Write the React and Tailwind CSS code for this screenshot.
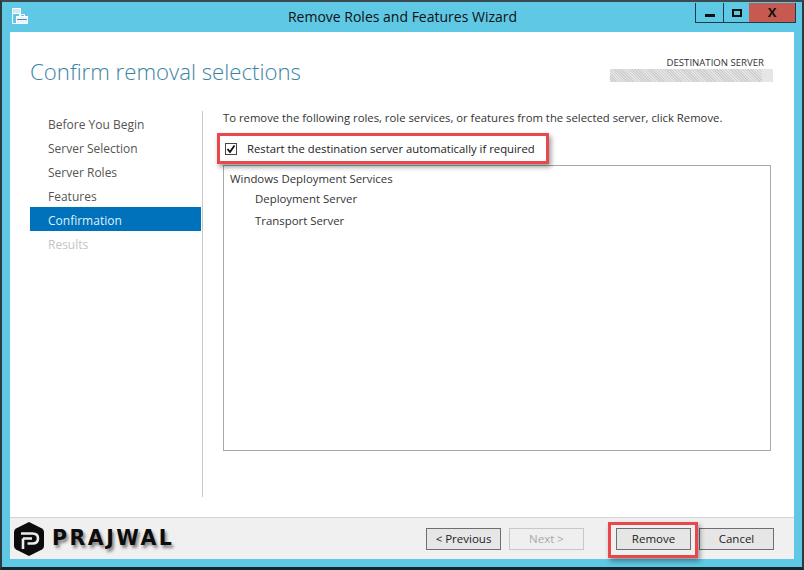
const navItems = [
  { label: "Before You Begin" },
  { label: "Server Selection" },
  { label: "Server Roles" },
  { label: "Features" },
  { label: "Confirmation", active: true },
  { label: "Results", disabled: true },
];

function AppIcon() {
  return (
    <svg width="16" height="16" viewBox="0 0 16 16" fill="none" stroke="#fff" strokeWidth="1">
      <rect x="0.5" y="0.5" width="8" height="5" fill="#cfeaf5" />
      <rect x="0.5" y="5.5" width="8" height="10" fill="#5ec8e5" />
      <rect x="4.5" y="8.5" width="11" height="7" fill="#e8f5fa" stroke="#fff" />
      <path d="M7.5 8V6.5h5V8" />
      <path d="M5 11.5h10" stroke="#4f8fb0" />
    </svg>
  );
}

function Logo() {
  return (
    <svg width="30" height="34" viewBox="0 0 30 34">
      <path d="M15 0 L28 6.5 Q30 7.5 30 10 V24 Q30 26.5 28 27.5 L15 34 L2 27.5 Q0 26.5 0 24 V10 Q0 7.5 2 6.5 Z" fill="#0c0c0c" />
      <path d="M7 11.5 H18.5 Q24 11.5 24 16.5 Q24 21.5 18.5 21.5 H13.5 M9 16.5 V27 M9 16.5 H18" fill="none" stroke="#ececec" strokeWidth="2.6" />
    </svg>
  );
}

function Btn({ children, disabled }) {
  return (
    <button
      className={
        disabled
          ? "w-[75px] h-[22px] bg-[#efefef] border border-[#c8c8c8] text-[11.5px] text-[#a8a8a8] flex items-center justify-center"
          : "w-[75px] h-[22px] bg-[#e6e6e6] border border-[#6f6f6f] text-[11.5px] text-[#222] flex items-center justify-center"
      }
    >
      {children}
    </button>
  );
}

export default function App() {
  return (
    <div className="relative w-[804px] h-[570px] overflow-hidden bg-[#5ec8e5] border-t-2 border-x-2 border-b-[3px] border-t-[#3a4a50] border-x-[#2c3a40] border-b-[#12262e] flex flex-col font-['Open_Sans','Noto_Sans',sans-serif] text-[#333]">
      <div className="relative h-[30px] shrink-0 flex items-start">
        <div className="ml-[10px] mt-[6px]"><AppIcon /></div>
        <div className="flex-1 text-center text-[14px] leading-[30px] text-[#111] ml-[-26px] mr-[-108px]">Remove Roles and Features Wizard</div>
        <div className="flex h-[20px] mt-[1px] mr-[6px] border border-t-0 border-[#1d3c48]">
          <div className="w-[28px] border-r border-[#1d3c48] flex items-end justify-center pb-[5px]">
            <div className="w-[10px] h-[3px] bg-[#111]" />
          </div>
          <div className="w-[25px] flex items-center justify-center">
            <div className="w-[10px] h-[8px] border-2 border-[#111]" />
          </div>
          <div className="w-[46px] bg-[#c75a50] flex items-center justify-center text-[13px] font-bold text-[#111] leading-none">X</div>
        </div>
      </div>

      <div className="flex-1 mx-[8px] flex flex-col bg-white min-h-0">
        <div className="h-[77px] shrink-0 flex justify-between pl-[20px] pr-[21px]">
          <div className="pt-[21px] text-[22.2px] leading-[38px] font-light text-[#3b84a4]">Confirm removal selections</div>
          <div className="w-[163px] pt-[25px]">
            <div className="text-[9.6px] leading-[12px] text-[#333] text-right pr-[9px]">DESTINATION SERVER</div>
            <div className="h-[13px] flex">
              <div className="w-[152px] bg-[#d9d9d9] bg-[repeating-linear-gradient(45deg,#cfcfcf_0px,#cfcfcf_1px,#e4e4e4_1px,#e4e4e4_2px)]" />
              <div className="flex-1 bg-[#e6e6e6]" />
            </div>
          </div>
        </div>

        <div className="flex-1 flex min-h-0">
          <div className="w-[171px] ml-[20px] shrink-0 pt-[2px]">
            {navItems.map((item) => (
              <div
                key={item.label}
                className={
                  "h-[24px] pl-[18px] text-[12px] leading-[27px] " +
                  (item.active ? "bg-[#0072bc] text-[#dff1fb]" : item.disabled ? "text-[#c4c4c4]" : "text-[#555]")
                }
              >
                {item.label}
              </div>
            ))}
          </div>
          <div className="w-px h-[386px] ml-[1px] mt-[2px] bg-[#c9c9c9] shrink-0" />
          <div className="ml-[20px] w-[548px] flex flex-col">
            <div className="text-[11.3px] leading-[16px] text-[#333] mt-[1px] h-[31px]">
              To remove the following roles, role services, or features from the selected server, click Remove.
            </div>
            <div className="flex items-center h-[16px] ml-[2px] text-[11.3px]">
              <div className="w-[12px] h-[12px] border border-[#444] flex items-center justify-center bg-white">
                <svg width="10" height="10" viewBox="0 0 10 10" fill="none" stroke="#111" strokeWidth="1.8">
                  <path d="M1.5 5 L4 8 L8.5 1.5" />
                </svg>
              </div>
              <span className="ml-[10px] text-[#222]">Restart the destination server automatically if required</span>
            </div>
            <div className="mt-[8px] h-[286px] border border-[#a8a8a8] pl-[6px] pt-[3px] text-[11.4px] text-[#333]">
              <div className="leading-[20px]">Windows Deployment Services</div>
              <div className="leading-[20px] pl-[25px]">Deployment Server</div>
              <div className="leading-[24px] pl-[25px]">Transport Server</div>
            </div>
          </div>
        </div>

        <div className="h-[42px] shrink-0 bg-[#f0f0f0] border-t border-[#d4d4d4] flex items-center pl-[4px] pr-[20px]">
          <Logo />
          <span className="ml-[8px] font-['DejaVu_Sans',sans-serif] font-bold text-[20.5px] tracking-[2.5px] text-[#0c0c0c] [text-shadow:2px_3px_3px_rgba(0,0,0,0.45)]">PRAJWAL</span>
          <div className="ml-auto flex">
            <Btn>&lt; Previous</Btn>
            <div className="ml-[8px]"><Btn disabled>Next &gt;</Btn></div>
            <div className="ml-[32px]"><Btn>Remove</Btn></div>
            <div className="ml-[8px]"><Btn>Cancel</Btn></div>
          </div>
        </div>
      </div>
      <div className="h-[8px] shrink-0" />

      <div className="absolute left-[215px] top-[131px] w-[332px] h-[31px] border-[3px] border-[#e8474c] shadow-[2px_3px_5px_rgba(0,0,0,0.4)]" />
      <div className="absolute left-[606px] top-[520px] w-[90px] h-[36px] border-[3px] border-[#e8474c] shadow-[2px_3px_5px_rgba(0,0,0,0.4)]" />
    </div>
  );
}
